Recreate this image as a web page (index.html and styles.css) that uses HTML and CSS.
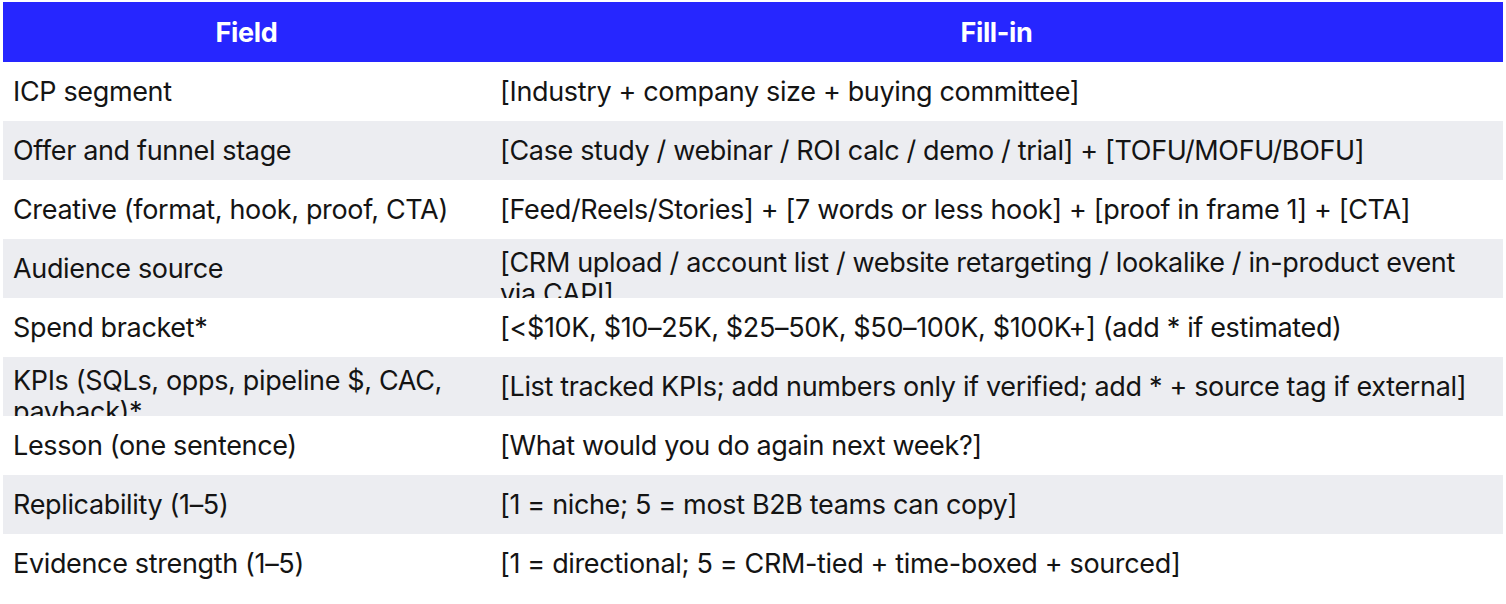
FILE: index.html
```html
<!DOCTYPE html>
<html>
<head>
<meta charset="utf-8">
<link rel="stylesheet" href="styles.css">
</head>
<body>
<div class="table">
  <div class="row head">
    <div class="cell">Field</div>
    <div class="cell">Fill-in</div>
  </div>
  <div class="row">
    <div class="cell">ICP segment</div>
    <div class="cell">[Industry + company size + buying committee]</div>
  </div>
  <div class="row alt">
    <div class="cell">Offer and funnel stage</div>
    <div class="cell">[Case study / webinar / ROI calc / demo / trial] + [TOFU/MOFU/BOFU]</div>
  </div>
  <div class="row">
    <div class="cell">Creative (format, hook, proof, CTA)</div>
    <div class="cell">[Feed/Reels/Stories] + [7 words or less hook] + [proof in frame 1] + [CTA]</div>
  </div>
  <div class="row alt">
    <div class="cell">Audience source</div>
    <div class="cell">[CRM upload / account list / website retargeting / lookalike / in-product event via CAPI]</div>
  </div>
  <div class="row">
    <div class="cell">Spend bracket*</div>
    <div class="cell">[&lt;$10K, $10–25K, $25–50K, $50–100K, $100K+] (add * if estimated)</div>
  </div>
  <div class="row alt">
    <div class="cell">KPIs (SQLs, opps, pipeline $, CAC, payback)*</div>
    <div class="cell">[List tracked KPIs; add numbers only if verified; add * + source tag if external]</div>
  </div>
  <div class="row">
    <div class="cell">Lesson (one sentence)</div>
    <div class="cell">[What would you do again next week?]</div>
  </div>
  <div class="row alt">
    <div class="cell">Replicability (1–5)</div>
    <div class="cell">[1 = niche; 5 = most B2B teams can copy]</div>
  </div>
  <div class="row">
    <div class="cell">Evidence strength (1–5)</div>
    <div class="cell">[1 = directional; 5 = CRM-tied + time-boxed + sourced]</div>
  </div>
</div>
</body>
</html>
```
FILE: styles.css
```css
html, body {
  margin: 0;
  background: #ffffff;
}
body {
  padding: 2px 3px;
  font-family: Inter, "Noto Sans", sans-serif;
  color: #141414;
}
.table {
  width: 1500px;
}
.row {
  display: grid;
  grid-template-columns: 487px 1fr;
  height: 59px;
  background: #ffffff;
}
.row.alt {
  background: #ecedf1;
}
.row.head {
  height: 60px;
  background: #2626ff;
  color: #ffffff;
  font-weight: 700;
}
.cell {
  display: flex;
  align-items: safe center;
  overflow: hidden;
  padding: 8px 10px;
  font-size: 27px;
  line-height: 31px;
  letter-spacing: -0.35px;
  box-sizing: border-box;
}
.head .cell {
  justify-content: center;
}
```
